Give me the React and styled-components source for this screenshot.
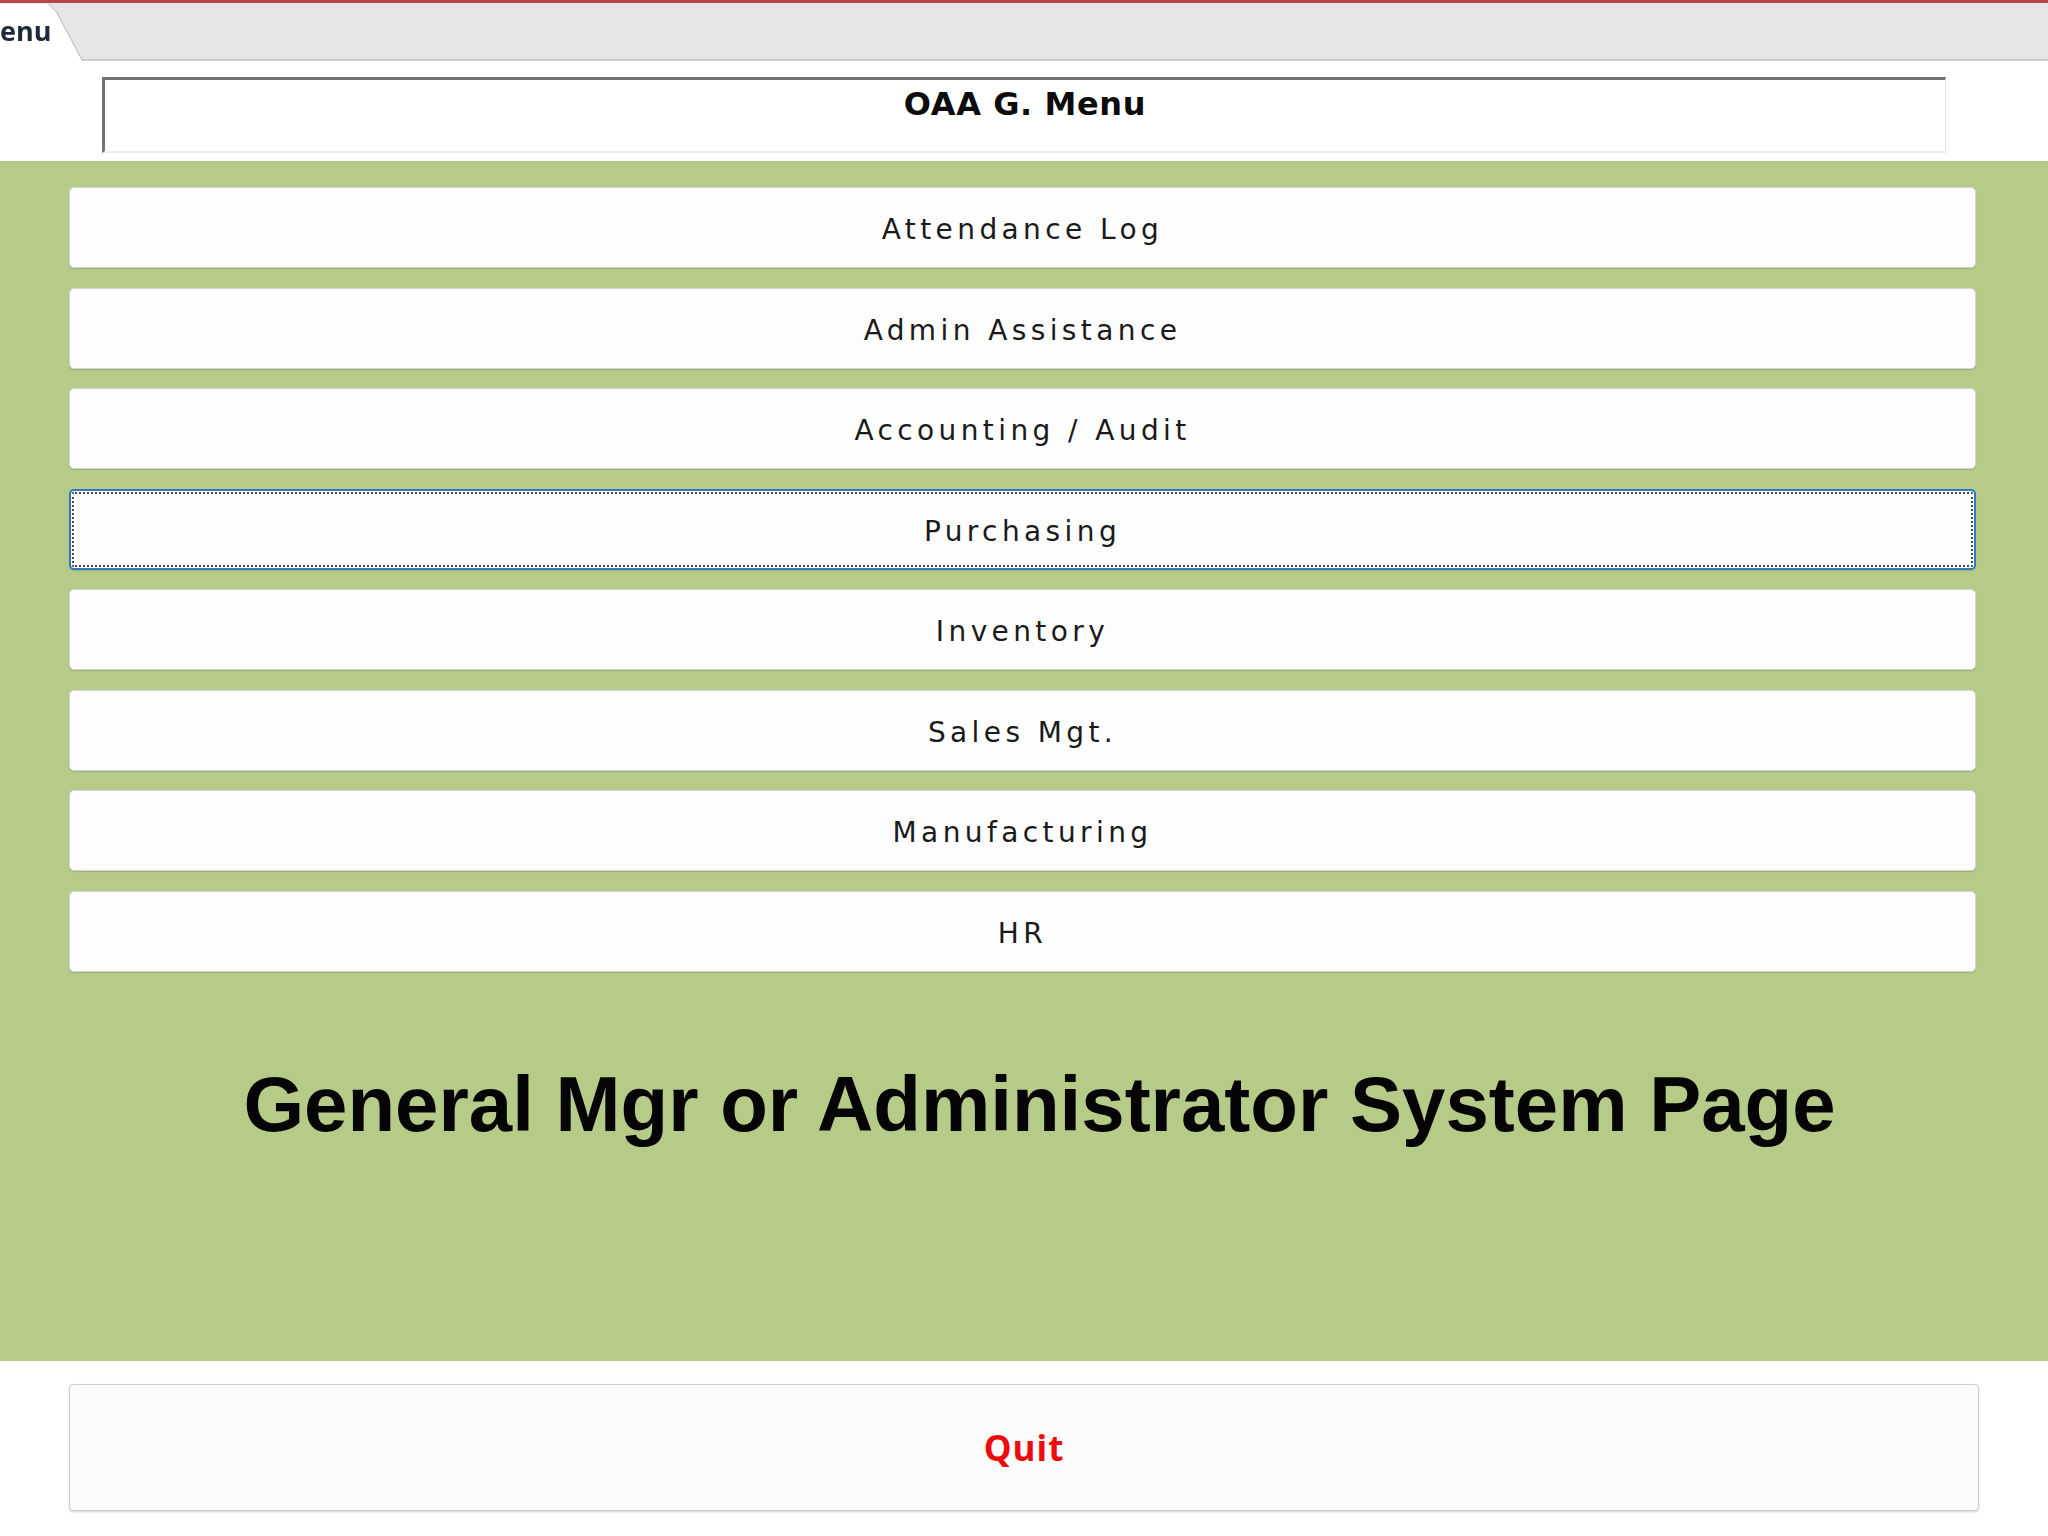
import React from "react";
import styled, { createGlobalStyle } from "styled-components";

const Global = createGlobalStyle`
  html, body { margin: 0; padding: 0; background: #ffffff; }
  body { font-family: "DejaVu Sans", "Liberation Sans", sans-serif; }
  * { box-sizing: border-box; }
`;

const Page = styled.div`
  width: 2048px;
  min-height: 1536px;
  display: flex;
  flex-direction: column;
  background: #ffffff;
`;

const TabBar = styled.div`
  height: 61px;
  background: #e6e6e6;
  border-top: 3px solid #b8454a;
  border-bottom: 2px solid #cbcbcb;
  display: flex;
  align-items: stretch;
`;

const TabShadow = styled.div`
  display: flex;
  filter: drop-shadow(1.5px 0 0 #b5b5b5);
  margin-top: 1px;
  margin-bottom: -2px;
`;

const Tab = styled.div`
  width: 82px;
  background: #ffffff;
  clip-path: polygon(0 0, 48px 0, 56px 8px, 82px 100%, 0 100%);
  font-family: "Open Sans", "DejaVu Sans", sans-serif;
  font-weight: 700;
  font-size: 27px;
  color: #1d2a3c;
  padding-top: 10px;
  line-height: 34px;
  white-space: nowrap;
`;

const HeaderArea = styled.div`
  height: 100px;
  padding: 16px 102px 0 102px;
`;

const TitleBox = styled.div`
  height: 76px;
  border-top: 3px solid #737373;
  border-left: 3px solid #737373;
  border-right: 1px solid #e4e4e4;
  border-bottom: 2px solid #ececec;
  display: flex;
  justify-content: center;
  padding-top: 6px;
`;

const Title = styled.div`
  font-family: "DejaVu Sans", sans-serif;
  font-weight: 700;
  font-size: 32px;
  line-height: 37px;
  letter-spacing: 0.6px;
  color: #0c0c0c;
`;

const Green = styled.div`
  height: 1200px;
  background: #b6cb88;
  padding: 26px 72px 0 69px;
  display: flex;
  flex-direction: column;
`;

const MenuList = styled.div`
  display: flex;
  flex-direction: column;
  gap: 19.5px;
`;

const MenuButton = styled.div`
  height: 81px;
  background: #fdfdfd;
  border: ${(p) => (p.$focused ? "2px solid #2f78c4" : "1px solid #cfd5dc")};
  border-radius: 5px;
  box-shadow: 0 1px 1px rgba(80, 90, 70, 0.25);
  display: flex;
  align-items: center;
  justify-content: center;
  font-family: "DejaVu Sans", sans-serif;
  font-size: 28px;
  letter-spacing: 4.4px;
  color: #1a1a1a;
  outline: ${(p) => (p.$focused ? "2px dotted #4a4a4a" : "none")};
  outline-offset: -5px;
  padding-top: 4px;
`;

const Heading = styled.div`
  margin-top: 92px;
  padding-left: 34px;
  text-align: center;
  font-family: "Liberation Sans", Arial, sans-serif;
  font-weight: 700;
  font-size: 78px;
  line-height: 80px;
  color: #050505;
`;

const Footer = styled.div`
  padding: 23px 69px 0 69px;
`;

const QuitButton = styled.div`
  height: 127px;
  background: #fbfbfb;
  border: 1px solid #cdcdcd;
  border-radius: 4px;
  box-shadow: 0 1px 2px rgba(0, 0, 0, 0.18);
  display: flex;
  align-items: center;
  justify-content: center;
  font-family: "Open Sans", "DejaVu Sans", sans-serif;
  font-weight: 700;
  font-size: 35px;
  letter-spacing: 1px;
  color: #ee0b0b;
`;

const items = [
  "Attendance Log",
  "Admin Assistance",
  "Accounting / Audit",
  "Purchasing",
  "Inventory",
  "Sales Mgt.",
  "Manufacturing",
  "HR",
];

export default function App() {
  return (
    <Page>
      <Global />
      <TabBar>
        <TabShadow>
          <Tab>enu</Tab>
        </TabShadow>
      </TabBar>
      <HeaderArea>
        <TitleBox>
          <Title>OAA G. Menu</Title>
        </TitleBox>
      </HeaderArea>
      <Green>
        <MenuList>
          {items.map((t) => (
            <MenuButton key={t} $focused={t === "Purchasing"}>
              {t}
            </MenuButton>
          ))}
        </MenuList>
        <Heading>General Mgr or Administrator System Page</Heading>
      </Green>
      <Footer>
        <QuitButton>Quit</QuitButton>
      </Footer>
    </Page>
  );
}
